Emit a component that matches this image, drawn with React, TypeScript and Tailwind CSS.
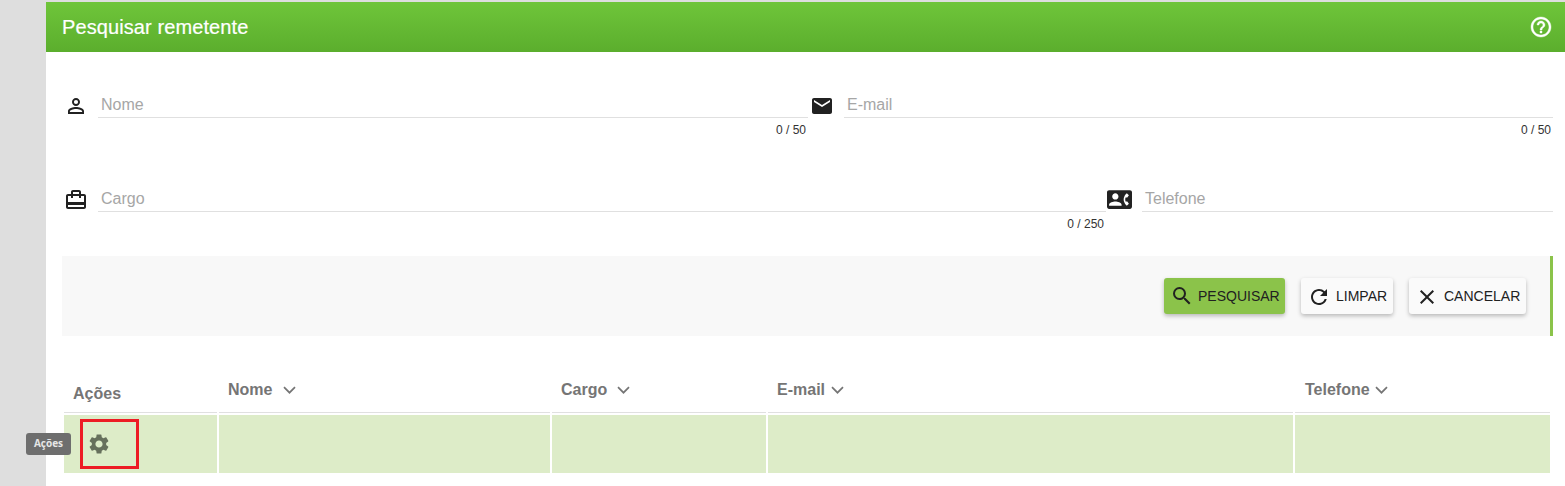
import type { ReactNode } from "react";
import {
  MdPersonOutline,
  MdEmail,
  MdCardTravel,
  MdSearch,
  MdRefresh,
  MdClose,
  MdSettings,
} from "react-icons/md";

function HelpIcon() {
  return (
    <svg className="size-6" viewBox="0 0 24 24" fill="currentColor" stroke="currentColor" strokeWidth="0.4">
      <path d="M11 18h2v-2h-2v2zm1-16C6.48 2 2 6.48 2 12s4.48 10 10 10 10-4.48 10-10S17.52 2 12 2zm0 18c-4.41 0-8-3.59-8-8s3.59-8 8-8 8 3.59 8 8-3.59 8-8 8zm0-14c-2.21 0-4 1.79-4 4h2c0-1.1.9-2 2-2s2 .9 2 2c0 2-3 1.75-3 5h2c0-2.25 3-2.5 3-5 0-2.21-1.79-4-4-4z" />
    </svg>
  );
}

function ContactPhoneIcon() {
  return (
    <svg className="ml-[1px] mt-[-1px] size-[25px]" viewBox="0 0 24 24" fill="currentColor">
      <path d="M22 3H2C.9 3 0 3.9 0 5v14c0 1.1.9 2 2 2h20c1.1 0 1.99-.9 1.99-2L24 5c0-1.1-.9-2-2-2zM8 6c1.66 0 3 1.34 3 3s-1.34 3-3 3-3-1.34-3-3 1.34-3 3-3zm6 12H2v-1c0-2 4-3.1 6-3.1s6 1.1 6 3.1v1zm3.85-4h1.64L21 16l-1.99 1.99A7.512 7.512 0 0 1 16.28 14c-.18-.64-.28-1.31-.28-2s.1-1.36.28-2a7.474 7.474 0 0 1 2.73-3.99L21 8l-1.51 2h-1.64c-.22.63-.35 1.3-.35 2s.13 1.37.35 2z" />
    </svg>
  );
}

function Field({ icon, label, counter, className }: { icon: ReactNode; label: string; counter?: string; className: string }) {
  return (
    <div className={`flex ${className}`}>
      <div className="w-9 shrink-0 pt-[3px] text-[#212121]">{icon}</div>
      <div className="min-w-0 grow">
        <div className="h-[27px] border-b border-[#e0e0e0] pl-[3px] text-base leading-[27px] text-[#a6a6a6]">{label}</div>
        {counter && <div className="pr-[2px] pt-1 text-right text-xs leading-4 text-[#333]">{counter}</div>}
      </div>
    </div>
  );
}

function Action({ icon, label, className }: { icon: ReactNode; label: string; className: string }) {
  return (
    <button
      type="button"
      className={`flex h-9 items-center whitespace-nowrap rounded-[3px] pl-[6px] text-sm text-[#212121] shadow-[0_2px_4px_rgba(0,0,0,0.26)] ${className}`}
    >
      {icon}
      <span className="ml-1">{label}</span>
    </button>
  );
}

function Column({ label, className }: { label: string; className: string }) {
  return (
    <div className={`flex border-b border-[#e0e0e0] pt-[14px] leading-5 ${className}`}>
      <span>{label}</span>
      <svg className="mt-[6px] h-2 w-[13px]" viewBox="0 0 13 8" fill="none" stroke="currentColor" strokeWidth="1.7">
        <path d="M1 1.2 6.5 6.7 12 1.2" />
      </svg>
    </div>
  );
}

export default function App() {
  return (
    <div className="h-[486px] overflow-hidden bg-[#dedede] pl-[46px] pt-[2px] font-['Liberation_Sans',Arial,sans-serif]">
      <main className="h-[484px] bg-white">
        <header className="flex h-[50px] items-center justify-between bg-linear-to-b from-[#6fc53a] to-[#5bae2d] pl-4 pr-3 text-white">
          <h1 className="text-xl tracking-[0.1px] [-webkit-text-stroke:0.2px_white]">Pesquisar remetente</h1>
          <HelpIcon />
        </header>

        <form className="pl-[16px] pr-3">
          <div className="flex h-[94px] pt-[39px]">
            <Field className="w-[746px]" icon={<MdPersonOutline className="ml-[2px]" size={24} />} label="Nome" counter="0 / 50" />
            <Field className="w-[745px]" icon={<MdEmail className="ml-[2px]" size={24} />} label="E-mail" counter="0 / 50" />
          </div>
          <div className="flex h-[110px] pt-[39px]">
            <Field className="w-[1044px]" icon={<MdCardTravel className="ml-[2px]" size={24} />} label="Cargo" counter="0 / 250" />
            <Field className="w-[447px]" icon={<ContactPhoneIcon />} label="Telefone" />
          </div>
          <div className="flex h-20 items-center justify-end gap-4 border-r-3 border-[#8bc34a] bg-[#f8f8f8] pr-6">
            <Action className="w-[121px] bg-[#8bc34a]" icon={<MdSearch size={24} className="shrink-0" />} label="PESQUISAR" />
            <Action className="w-[92px] bg-[#fafafa]" icon={<MdRefresh size={24} className="mr-[1px] mt-[1px] shrink-0" />} label="LIMPAR" />
            <Action className="w-[117px] bg-[#fafafa]" icon={<MdClose size={24} className="mr-[1px] mt-[1px] shrink-0" />} label="CANCELAR" />
          </div>
        </form>

        <section className="ml-[18px] mt-[30px] grid w-[1486px] grid-cols-[153px_331px_214px_525px_255px] grid-rows-[47px_58px] gap-[2px] text-base font-bold text-[#757575]">
          <div className="border-b border-[#e0e0e0] pl-[9px] pt-[18px] leading-5">Ações</div>
          <Column label="Nome" className="gap-[11px] pl-[9px]" />
          <Column label="Cargo" className="gap-[10px] pl-[9px]" />
          <Column label="E-mail" className="gap-[6px] pl-[9px]" />
          <Column label="Telefone" className="gap-[5px] pl-[10px]" />
          <div className="relative bg-[#ddecc8] pl-4 pt-1">
            <div className="flex h-[50px] w-[59px] items-center border-3 border-[#ed1c24] pl-1 text-[#66705c]">
              <MdSettings size={24} />
            </div>
            <div className="absolute -left-[38px] top-[18px] flex h-[22px] w-[45px] items-center justify-center rounded-[3px] bg-[#6e6e6e] pb-[1px] font-['Open_Sans',sans-serif] text-[10px] font-bold text-[#e6e6e6]">
              Ações
            </div>
          </div>
          <div className="bg-[#ddecc8]" />
          <div className="bg-[#ddecc8]" />
          <div className="bg-[#ddecc8]" />
          <div className="bg-[#ddecc8]" />
        </section>
      </main>
    </div>
  );
}
